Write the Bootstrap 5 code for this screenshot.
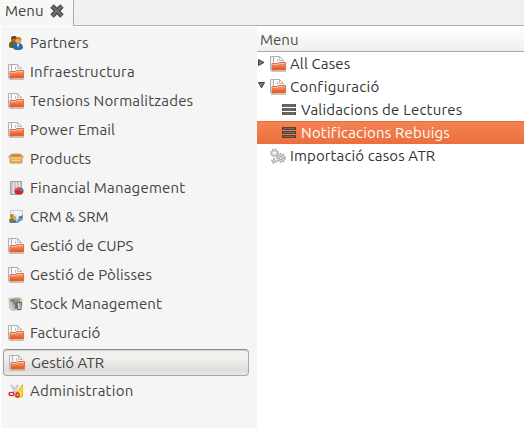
<!DOCTYPE html>
<html lang="ca">
<head>
<meta charset="utf-8">
<meta name="viewport" content="width=device-width, initial-scale=1">
<title>Menu</title>
<link href="https://cdn.jsdelivr.net/npm/bootstrap@5.3.0/dist/css/bootstrap.min.css" rel="stylesheet">
<style>
body{font:15px/23px Ubuntu,"Noto Sans",sans-serif;color:#3e3e3e;background:#fff;height:428px;overflow:hidden}
svg{flex:none;display:block}
span{white-space:nowrap}
.tabstrip{height:26px;background:#f1f0ee;border-bottom:1px solid #b4b1ac}
.menu-tab{width:74px;height:26px;padding-left:5px;gap:7px;background:linear-gradient(#f8f8f8,#f5f5f5);border-right:1px solid #b0ada8;line-height:22px}
.side{width:257px;background:#f5f5f5;border-left:1px solid #fff;padding:1px 8px 0 2px;margin-top:1px}
.side-item{height:29px;padding:0 0 0 5px;gap:6px;color:#444;border-radius:4px}
.side-item.current{height:27px;margin:2px 0 0;border:1px solid #aaa59e;border-top-color:#8f8b85;background:linear-gradient(#efeeec,#f2f1ef 30%,#dfddda 80%,#eae8e6);box-shadow:inset 0 1px #d6d4d0}
.tree{margin-top:1px}
.tree-head{height:25px;padding-left:3px;background:linear-gradient(#fff,#f0efed);border-bottom:1px solid #aaa;line-height:26px;color:#4c4c4c}
.tree-row{height:23px;color:#333}
.child-row{padding-left:25px;gap:5px}
.chosen{background:linear-gradient(#e56d40 1px,#f58252 1px,#ec6f3e);color:#fff}
.twist{width:13px;height:16px}
.s1{letter-spacing:.12px}
.s2{letter-spacing:.18px}
.s3{letter-spacing:.25px}
</style>
<script src="https://cdn.jsdelivr.net/npm/bootstrap@5.3.0/dist/js/bootstrap.bundle.min.js"></script>
</head>
<body class="d-flex flex-column">
<svg width="0" height="0" class="position-absolute"><defs>
<linearGradient id="or" x2="0" y2="1"><stop stop-color="#f3a584"/><stop offset=".45" stop-color="#ee7f50"/><stop offset="1" stop-color="#e2500f"/></linearGradient>
<symbol id="folder" viewBox="0 0 16 16"><path d="M.5 14V.5h5v13.500z" fill="#f4f4f4" stroke="#b0b0b0"/><path d="M3.500 8V.5h6L13.500 4.500V8z" fill="#fafafa" stroke="#adadad"/><path d="M9.500 1v3.500H13M7.500 3v3" fill="none" stroke="#bdbdbd"/><path d="M1 6.500h6l1-1h8V8H1z" fill="#fff" opacity=".8"/><path d="M2 14V7.500h5.500L8.500 6.500H15.500V14z" fill="url(#or)" stroke="#dc7048"/><path d="M2.500 8.500H8L9 7.500h6" stroke="#f7bda4" fill="none"/><path d="M1 15.300h15" stroke="#c4b2aa"/></symbol>
<symbol id="list" viewBox="0 0 14 12"><path d="M0 1.500h14M0 5.500h14M0 9.500h14" stroke="#2e2e2a" stroke-width="2.600"/><path d="M1 1.500h12M1 5.500h12M1 9.500h12" stroke="#6c6c62"/></symbol>
</defs></svg>
<header class="tabstrip d-flex flex-shrink-0"><div class="menu-tab d-flex"><span>Menu</span>
<svg class="mt-1" width="14" height="14" viewBox="0 0 14 14"><path d="M2 2l10 10M12 2l-10 10" stroke="#484848" stroke-width="4.800"/><path d="M2.500 2.500l9 9M11.500 2.500l-9 9" stroke="#707070" stroke-width="2.400"/></svg></div></header>
<main class="d-flex flex-grow-1">
<nav class="side d-flex flex-column flex-shrink-0">
<a class="side-item d-flex align-items-center text-decoration-none"><svg width="16" height="16" viewBox="0 0 16 16"><path d="M1 10q0-4 4-4t5 4v3H3q-2 0-2-2" fill="#566b25"/><circle cx="6" cy="4" r="3" fill="#a8632b"/><path d="M3 4q0-3 3-3t3 3q-3-1-6 0" fill="#70421f"/><path d="M5 13q0-5 5-5t5 5q-1 2-5 2t-5-2" fill="#2e68b4"/><path d="M9 9l1 4 1-4" fill="#fff"/><circle cx="10.500" cy="5.500" r="3" fill="#eda54b"/><path d="M7.500 5q0-3 3-3t3 3q-3-2-6 0" fill="#c57b29"/></svg><span class="s2">Partners</span></a>
<a class="side-item d-flex align-items-center text-decoration-none"><svg width="16" height="16"><use href="#folder"/></svg><span class="s3">Infraestructura</span></a>
<a class="side-item d-flex align-items-center text-decoration-none"><svg width="16" height="16"><use href="#folder"/></svg><span class="s2">Tensions Normalitzades</span></a>
<a class="side-item d-flex align-items-center text-decoration-none"><svg width="16" height="16"><use href="#folder"/></svg><span class="s2">Power Email</span></a>
<a class="side-item d-flex align-items-center text-decoration-none"><svg width="16" height="16" viewBox="0 0 16 16"><path d="M3.500 3h9L15.300 6l-1.300 1.500v4l-1 .5H3L2 11.500v-4L.7 6z" fill="#e6b064" stroke="#c99247"/><path d="M4 4h8l1 1.500H3z" fill="#b47a36"/><path d="M2 7h12M4 9.500h8" stroke="#f6cd8a"/></svg><span class="s1">Products</span></a>
<a class="side-item d-flex align-items-center text-decoration-none"><svg width="16" height="16" viewBox="0 0 16 16"><path d="M2.500 1.500h11v13h-11z" fill="#c9c9c9" stroke="#a0a0a0"/><path d="M5.500 2v12M8.500 2v11M11.500 2v11" stroke="#e2e2e2"/><ellipse cx="11" cy="11" rx="4.500" ry="3.500" fill="#c92532"/><path d="M11 10.500V7.500q-3 0-4 3z" fill="#e84d55"/><path d="M11 10.500l4-1q-1-2-4-2z" fill="#427cc1"/><path d="M11 10.500l4.500-1v1.500z" fill="#5eaa45"/></svg><span class="s2">Financial Management</span></a>
<a class="side-item d-flex align-items-center text-decoration-none"><svg width="16" height="16" viewBox="0 0 16 16"><path d="M2.500 1.500h12v9h-12z" fill="#f7f7f7" stroke="#ccc"/><path d="M3 2l5.500 5L14 2" fill="none" stroke="#ddd"/><circle cx="4" cy="7" r="2" fill="#bd7b32"/><path d="M1 12q0-3 3-3t4 4l-2 1H2z" fill="#76802c"/><circle cx="6.500" cy="9" r="2" fill="#e4a34c"/><path d="M4 13.500q0-2.500 3-2.500l2 1 2-3-1-1 5-2-1 6-1-1q-2 4-9 2.500" fill="#4479b4"/><path d="M8 13q4 0 5-4" fill="none" stroke="#8bb7df"/></svg><span>CRM &amp; SRM</span></a>
<a class="side-item d-flex align-items-center text-decoration-none"><svg width="16" height="16"><use href="#folder"/></svg><span>Gestió de CUPS</span></a>
<a class="side-item d-flex align-items-center text-decoration-none"><svg width="16" height="16"><use href="#folder"/></svg><span class="s1">Gestió de Pòlisses</span></a>
<a class="side-item d-flex align-items-center text-decoration-none"><svg width="16" height="16" viewBox="0 0 16 16"><path d="M.5 2l11-1 3 2-.5 11-10 1-3-3z" fill="#c9c7bb"/><path d="M2 4l4-1 4 9-3 1z" fill="#6f7262"/><path d="M6 2l6 1v4H8z" fill="#92988b"/><path d="M8.500 6.500h5l-1 7h-3z" fill="#8d9488" stroke="#5c6058"/><path d="M4 5l3 6M10.500 7v6M12 7v6" stroke="#d4d6cc"/></svg><span class="s1">Stock Management</span></a>
<a class="side-item d-flex align-items-center text-decoration-none"><svg width="16" height="16"><use href="#folder"/></svg><span class="s1">Facturació</span></a>
<a class="side-item current d-flex align-items-center text-decoration-none"><svg width="16" height="16"><use href="#folder"/></svg><span>Gestió ATR</span></a>
<a class="side-item d-flex align-items-center text-decoration-none"><svg width="16" height="16" viewBox="0 0 16 16"><path d="M14.500 1.500v12.500H6z" fill="#f8d43a" stroke="#e9bd24"/><path d="M12.500 8v4h-2.500z" fill="#fff2a3"/><path d="M3 2l6 8M10 2L5 10" stroke="#a4a4a4" stroke-width="2"/><path d="M3 2l6 8M10 2L5 10" stroke="#e8e8e8"/><ellipse cx="3.500" cy="11" rx="2.500" ry="1.600" fill="none" stroke="#cf2424" stroke-width="1.300"/><ellipse cx="9.500" cy="12" rx="1.600" ry="2" fill="none" stroke="#cf2424" stroke-width="1.300"/></svg><span class="s3">Administration</span></a>
</nav>
<section class="tree flex-grow-1">
<div class="tree-head"><span>Menu</span></div>
<div class="tree-row d-flex align-items-center"><svg class="twist" viewBox="0 0 13 16"><path d="M1.500 3.500v6l5.500-3z" fill="#777" stroke="#444"/></svg><svg width="16" height="16"><use href="#folder"/></svg><span class="s1 ms-1">All Cases</span></div>
<div class="tree-row d-flex align-items-center"><svg class="twist" viewBox="0 0 13 16"><path d="M1.500 3.500h6l-3 5.500z" fill="#777" stroke="#444"/></svg><svg width="16" height="16"><use href="#folder"/></svg><span class="s3 ms-1">Configuració</span></div>
<div class="tree-row child-row d-flex align-items-center"><svg width="14" height="12"><use href="#list"/></svg><span class="s2">Validacions de Lectures</span></div>
<div class="tree-row child-row chosen d-flex align-items-center"><svg width="14" height="12"><use href="#list"/></svg><span class="s2">Notificacions Rebuigs</span></div>
<div class="tree-row d-flex align-items-center"><div class="twist"></div><svg width="16" height="16" viewBox="0 0 16 16"><g fill="#ddd" stroke="#b0b0b0"><circle cx="4.500" cy="5" r="3"/><circle cx="11" cy="10" r="3.500"/><circle cx="4" cy="13" r="1.500"/></g><g fill="none" stroke="#b0b0b0" stroke-width="1.500" stroke-dasharray="1.500 1.500"><circle cx="4.500" cy="5" r="3.800"/><circle cx="11" cy="10" r="4.200"/><circle cx="4" cy="13" r="2.200"/></g><circle cx="4.500" cy="5" r="1.300" fill="#fff"/><circle cx="11" cy="10" r="1.500" fill="#fff" stroke="#999"/></svg><span class="s1 ms-1">Importació casos ATR</span></div>
</section>
</main>
</body>
</html>
